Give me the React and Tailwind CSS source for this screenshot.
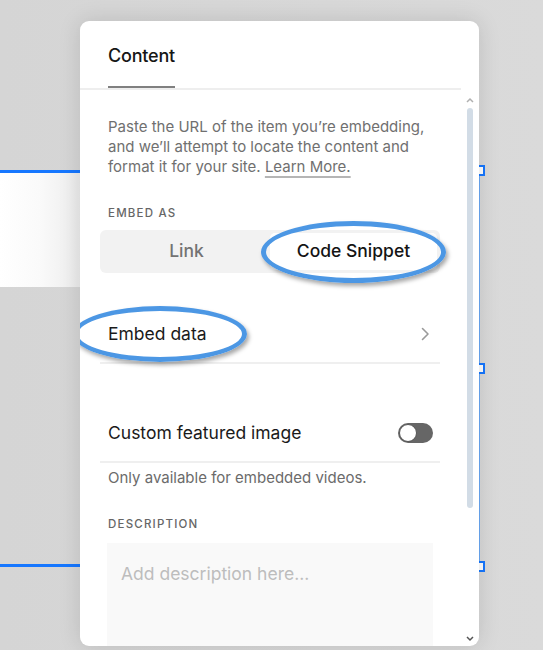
import React from "react";

function Chevron() {
  return (
    <svg width="10" height="14" viewBox="0 0 10 14" fill="none">
      <path d="M2.5 1.5 L8 7 L2.5 12.5" stroke="#9a9a9a" strokeWidth="1.6" strokeLinecap="round" strokeLinejoin="round" />
    </svg>
  );
}

function Bracket({ top }) {
  return (
    <div
      className="absolute left-[479px] w-[6px] h-[11px] border-[2px] border-l-0 border-[#1677ff] bg-white"
      style={{ top }}
    />
  );
}

export default function App() {
  return (
    <div className="relative w-[543px] h-[650px] overflow-hidden bg-gradient-to-r from-[#d5d5d5] to-[#dadada] font-['Inter',sans-serif]">
      {/* canvas elements behind */}
      <div className="absolute left-0 top-[170px] w-[80px] h-[3px] bg-[#1677ff]" />
      <div className="absolute left-0 top-[173px] w-[80px] h-[114px] bg-gradient-to-r from-white via-[#fafafa] to-[#ececec]" />
      <div className="absolute left-0 top-[564px] w-[80px] h-[3px] bg-[#1677ff]" />
      <div className="absolute left-[479px] top-[170px] w-[1px] h-[396px] bg-[#6aa8f5]" />
      <Bracket top="165px" />
      <Bracket top="363px" />
      <Bracket top="561px" />

      {/* panel */}
      <div className="relative z-10 ml-[80px] mt-[21px] w-[399px] h-[625px] bg-white rounded-[9px] shadow-[0_0_22px_rgba(0,0,0,0.13)] flex flex-col overflow-hidden">
        <div className="h-[69px] shrink-0 flex flex-col pt-[23px] pl-[28px] border-b-[2px] border-[#eeeeee] mr-[18px]">
          <div className="text-[18px] leading-[24px] font-medium text-[#161616] tracking-[-0.2px]">Content</div>
          <div className="mt-[18px] w-[67px] h-[3px] bg-[#808080]" />
        </div>
        <div className="flex flex-1 min-h-0">
          <div className="flex-1 pl-[20px] pr-[21px] pt-[27px]">
            <p className="px-2 text-[15px] leading-[20px] text-[#707070]">
              Paste the URL of the item you’re embedding, and we’ll attempt to locate the content and format it for your site.{" "}
              <span className="underline decoration-[#b5b5b5] decoration-[1.5px] underline-offset-[4px]">Learn More.</span>
            </p>
            <div className="mt-[28px] px-2 text-[11.5px] leading-[16px] tracking-[1.2px] font-medium text-[#666666]">EMBED AS</div>
            <div className="relative mt-[9px] h-[43px] bg-[#f2f2f2] rounded-[6px] p-[3px] flex">
              <div className="flex-1 flex items-center justify-center text-[17.5px] font-medium text-[#737373]">Link</div>
              <div className="flex-1 flex items-center justify-center bg-white rounded-[5px] text-[17.5px] font-medium text-[#141414]">Code Snippet</div>
              <div className="absolute left-[161px] top-[-9px] w-[185px] h-[62px] rounded-[50%] border-[5px] border-[#4c97e4] shadow-[2px_3px_4px_rgba(0,0,0,0.35)]" />
            </div>
            <div className="relative mt-[33px] h-[58px] py-4 flex items-center justify-between border-b-[2px] border-[#efefef]">
              <span className="px-2 text-[17.5px] leading-[24px] text-[#1a1a1a]">Embed data</span>
              <span className="mr-[10px] flex"><Chevron /></span>
              <div className="absolute left-[-27px] top-[0px] w-[174px] h-[56px] rounded-[50%] border-[5px] border-[#4c97e4] shadow-[2px_3px_4px_rgba(0,0,0,0.35)]" />
            </div>
            <div className="mt-[41px] h-[58px] flex items-center justify-between border-b-[2px] border-[#efefef]">
              <span className="px-2 text-[17.5px] leading-[24px] text-[#1a1a1a]">Custom featured image</span>
              <div className="mr-[7px] w-[35px] h-[20px] rounded-full bg-[#666666] relative">
                <div className="absolute left-[1px] top-[1px] w-[18px] h-[18px] rounded-full bg-white border-[1.5px] border-[#555]" />
              </div>
            </div>
            <div className="mt-[5px] px-2 text-[15px] leading-[20px] text-[#6b6b6b]">Only available for embedded videos.</div>
            <div className="mt-[28px] px-2 text-[11.5px] leading-[16px] tracking-[1.2px] font-medium text-[#666666]">DESCRIPTION</div>
            <div className="mt-[11px] mx-[7px] h-[140px] bg-[#f9f9f9] pt-[19px] px-[14px]">
              <div className="text-[17.5px] leading-[24px] text-[#bdbdbd]">Add description here...</div>
            </div>
          </div>
          <div className="w-[18px] shrink-0 flex flex-col items-center pt-[7px] pb-[4px]">
            <svg width="8" height="6" viewBox="0 0 8 6"><path d="M1 5 L4 2 L7 5" stroke="#b0b0b0" strokeWidth="1.5" fill="none" /></svg>
            <div className="mt-[5px] w-[6px] h-[400px] rounded-full bg-[#d2dce6]" />
            <div className="flex-1" />
            <svg width="8" height="6" viewBox="0 0 8 6"><path d="M1 1 L4 4 L7 1" stroke="#555" strokeWidth="1.5" fill="none" /></svg>
          </div>
        </div>
      </div>
    </div>
  );
}
